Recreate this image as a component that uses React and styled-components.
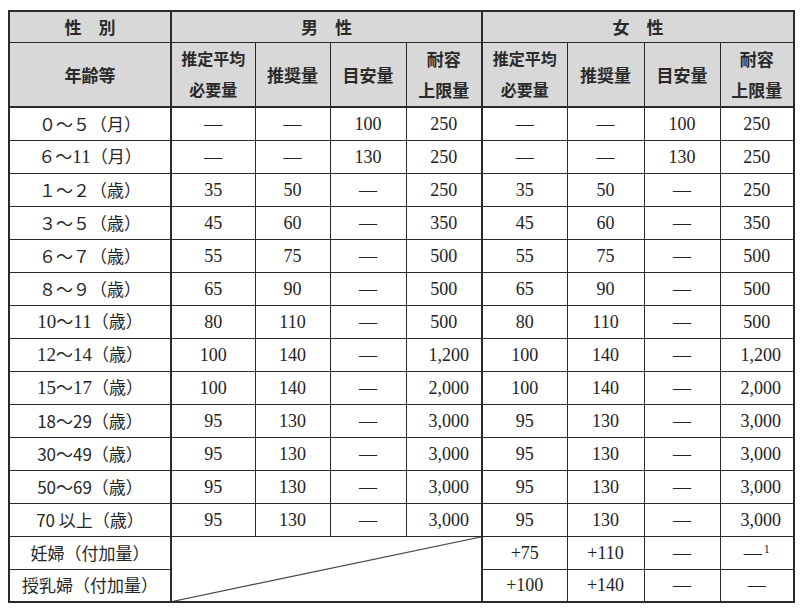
import React from "react";
import styled, { createGlobalStyle } from "styled-components";

const Global = createGlobalStyle`
  html, body { margin: 0; padding: 0; background: #fff; }
  body { font-family: "Noto Sans CJK JP", "Noto Sans", sans-serif; color: #222; }
`;

const Page = styled.div`
  padding: 10px 0 0 8px;
`;

const Table = styled.table`
  border-collapse: collapse;
  table-layout: fixed;
  width: 785px;
  border: 2px solid #2a2a2a;
`;

const HeadCell = styled.th`
  background: #d8d8d8;
  border: 1.5px solid #2a2a2a;
  border-right-width: ${(p) => (p.$thick ? "2px" : "1.5px")};
  border-bottom-width: ${(p) => (p.$thickBottom ? "2.5px" : "1.5px")};
  font-family: "Noto Sans CJK JP", sans-serif;
  font-weight: 700;
  font-size: ${(p) => (p.$small ? "16px" : "17px")};
  line-height: ${(p) => (p.$tall ? "31px" : "24px")};
  color: #2a2a2a;
  text-align: center;
  vertical-align: middle;
  padding: 0;
  white-space: nowrap;
`;

const LabelCell = styled.td`
  border: 1.5px solid #2a2a2a;
  border-right-width: 2px;
  font-family: "Noto Sans CJK JP", sans-serif;
  font-size: 17px;
  line-height: 20px;
  color: #262626;
  text-align: center;
  padding: 0;
  white-space: nowrap;
`;

const Num = styled.td`
  border: 1.5px solid #2a2a2a;
  border-right-width: ${(p) => (p.$thick ? "2px" : "1.5px")};
  font-family: "Liberation Serif", "Times New Roman", serif;
  font-size: 18px;
  line-height: 20px;
  color: #222;
  text-align: ${(p) => (p.$right ? "right" : "center")};
  padding: ${(p) => (p.$right ? "0 12px 0 0" : "0")};
  white-space: nowrap;
`;

const Row = styled.tr`
  height: ${(p) => p.$h}px;
`;

const SerifDigits = styled.span`
  font-family: "Liberation Serif", serif;
  font-size: 19px;
  line-height: 20px;
`;

const Sup = styled.sup`
  font-size: 12px;
  margin-left: 2px;
  vertical-align: 6px;
  line-height: 0;
`;

const DiagCell = styled.td`
  position: relative;
  border: 1.5px solid #2a2a2a;
  border-right-width: 2px;
  padding: 0;
`;

const Diag = styled.svg`
  position: absolute;
  inset: 0;
  width: 100%;
  height: 100%;
`;

const cols = [162, 84, 75, 76, 76, 85, 77, 76, 74];

const rows = [
  ["０～５（月）", "—", "—", "100", "250", "—", "—", "100", "250"],
  ["６～11（月）", "—", "—", "130", "250", "—", "—", "130", "250"],
  ["１～２（歳）", "35", "50", "—", "250", "35", "50", "—", "250"],
  ["３～５（歳）", "45", "60", "—", "350", "45", "60", "—", "350"],
  ["６～７（歳）", "55", "75", "—", "500", "55", "75", "—", "500"],
  ["８～９（歳）", "65", "90", "—", "500", "65", "90", "—", "500"],
  ["10～11（歳）", "80", "110", "—", "500", "80", "110", "—", "500"],
  ["12～14（歳）", "100", "140", "—", "1,200", "100", "140", "—", "1,200"],
  ["15～17（歳）", "100", "140", "—", "2,000", "100", "140", "—", "2,000"],
  ["18～29（歳）", "95", "130", "—", "3,000", "95", "130", "—", "3,000"],
  ["30～49（歳）", "95", "130", "—", "3,000", "95", "130", "—", "3,000"],
  ["50～69（歳）", "95", "130", "—", "3,000", "95", "130", "—", "3,000"],
  ["70 以上（歳）", "95", "130", "—", "3,000", "95", "130", "—", "3,000"],
];

function Label({ text }) {
  const m = text.match(/^(\d+)(～)(\d+)(.*)$/);
  if (m && ["10", "12", "15"].includes(m[1])) {
    return (
      <>
        <SerifDigits>{m[1]}</SerifDigits>～<SerifDigits>{m[3]}</SerifDigits>
        {m[4]}
      </>
    );
  }
  const m2 = text.match(/^(６)～(11)(.*)$/);
  if (m2) {
    return (
      <>
        ６～<SerifDigits>11</SerifDigits>
        {m2[3]}
      </>
    );
  }
  return text;
}

function SubHead({ a, b, thick }) {
  return (
    <HeadCell $thick={thick} $thickBottom $tall $small={a.length > 3}>
      {a}
      {b && <br />}
      {b}
    </HeadCell>
  );
}

export default function App() {
  return (
    <Page>
      <Global />
      <Table>
        <colgroup>
          {cols.map((w, i) => (
            <col key={i} style={{ width: w }} />
          ))}
        </colgroup>
        <thead>
          <Row $h={31}>
            <HeadCell $thick>性　別</HeadCell>
            <HeadCell colSpan={4} $thick>男　性</HeadCell>
            <HeadCell colSpan={4}>女　性</HeadCell>
          </Row>
          <Row $h={65}>
            <HeadCell $thick $thickBottom $tall>年齢等</HeadCell>
            <SubHead a="推定平均" b="必要量" />
            <SubHead a="推奨量" />
            <SubHead a="目安量" />
            <SubHead a="耐容" b="上限量" thick />
            <SubHead a="推定平均" b="必要量" />
            <SubHead a="推奨量" />
            <SubHead a="目安量" />
            <SubHead a="耐容" b="上限量" />
          </Row>
        </thead>
        <tbody>
          {rows.map((r, i) => (
            <Row key={i} $h={33}>
              <LabelCell>
                <Label text={r[0]} />
              </LabelCell>
              {r.slice(1).map((v, j) => (
                <Num key={j} $thick={j === 3} $right={v.includes(",")}>
                  {v}
                </Num>
              ))}
            </Row>
          ))}
          <Row $h={33}>
            <LabelCell>妊婦（付加量）</LabelCell>
            <DiagCell colSpan={4} rowSpan={2}>
              <Diag viewBox="0 0 100 100" preserveAspectRatio="none">
                <line x1="0" y1="100" x2="100" y2="0" stroke="#444" strokeWidth="1.2" vectorEffect="non-scaling-stroke" />
              </Diag>
            </DiagCell>
            <Num>+75</Num>
            <Num>+110</Num>
            <Num>—</Num>
            <Num>
              —<Sup>1</Sup>
            </Num>
          </Row>
          <Row $h={33}>
            <LabelCell>授乳婦（付加量）</LabelCell>
            <Num>+100</Num>
            <Num>+140</Num>
            <Num>—</Num>
            <Num>—</Num>
          </Row>
        </tbody>
      </Table>
    </Page>
  );
}
